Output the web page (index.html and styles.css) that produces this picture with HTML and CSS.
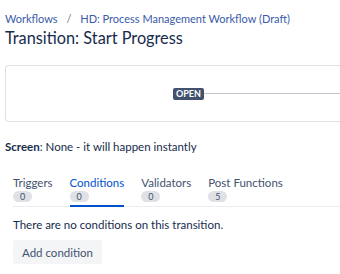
FILE: index.html
```html
<!DOCTYPE html>
<html>
<head>
    <meta charset="utf-8">
    <link rel="stylesheet" href="styles.css">
</head>
<body>
    <div class="crumbs">
        <a href="#">Workflows</a>
        <span class="sep">/</span>
        <a href="#">HD: Process Management Workflow (Draft)</a>
    </div>
    <h2 class="title">Transition: Start Progress</h2>

    <div class="diagram">
        <span class="lozenge">Open</span>
        <span class="line"></span>
    </div>

    <p class="screen"><b>Screen</b>: None - it will happen instantly</p>

    <div class="tabs">
        <div class="tab">Triggers<span class="count">0</span></div>
        <div class="tab active">Conditions<span class="count">0</span></div>
        <div class="tab">Validators<span class="count">0</span></div>
        <div class="tab">Post Functions<span class="count">5</span></div>
    </div>

    <div class="panel">
        <p class="empty">There are no conditions on this transition.</p>
        <button class="add">Add condition</button>
    </div>
</body>
</html>
```

FILE: styles.css
```css
html, body {
    overflow: hidden;
}

body {
    font-family: "Lato", "Noto Sans", sans-serif;
    font-size: 11.5px;
    color: #172B4D;
    background: #FFF;
    margin: 0;
    padding: 11px 0 0 5px;
}

.crumbs {
    font-size: 11px;
    line-height: 16px;
    color: #6B778C;
    white-space: nowrap;
}

.crumbs a {
    color: #3A5AA8;
    text-decoration: none;
}

.crumbs .sep {
    margin: 0 6px;
}

.title {
    font-size: 16.3px;
    font-weight: 400;
    line-height: 22px;
    margin: 0;
    color: #172B4D;
}

/* the diagram runs on past the right edge, so no right border */
.diagram {
    display: flex;
    align-items: center;
    height: 55px;
    margin-top: 16px;
    padding-left: 167px;
    border: 1px solid #DFE1E6;
    border-right: none;
    border-radius: 4px 0 0 4px;
}

.lozenge {
    background: #42526E;
    color: #FFF;
    font-size: 9px;
    font-weight: 700;
    text-transform: uppercase;
    line-height: 12px;
    padding: 0 3px;
    border-radius: 2px;
}

.line {
    flex: 1;
    border-top: 1px solid #C1C7D0;
}

.screen {
    margin: 17px 0 0;
    line-height: 16px;
}

.tabs {
    display: flex;
    gap: 17px;
    margin: 20px 0 0 8px;
    border-bottom: 1px solid #EBECF0;
}

.tab {
    display: flex;
    flex-direction: column;
    align-items: flex-start;
    line-height: 16px;
    padding-bottom: 3px;
    margin-bottom: -1px;
    border-bottom: 2px solid transparent;
    color: #42526E;
}

.tab.active {
    color: #0052CC;
    border-bottom-color: #0052CC;
}

.count {
    background: #DFE1E6;
    color: #42526E;
    font-size: 9px;
    line-height: 11px;
    padding: 0 7px;
    border-radius: 6px;
}

.panel {
    padding: 10px 0 0 8px;
}

.empty {
    margin: 0;
    line-height: 16px;
}

.add {
    font: inherit;
    color: #42526E;
    background: #F4F5F7;
    border: none;
    border-radius: 3px;
    height: 24px;
    padding: 0 9px;
    margin-top: 7px;
}
```
